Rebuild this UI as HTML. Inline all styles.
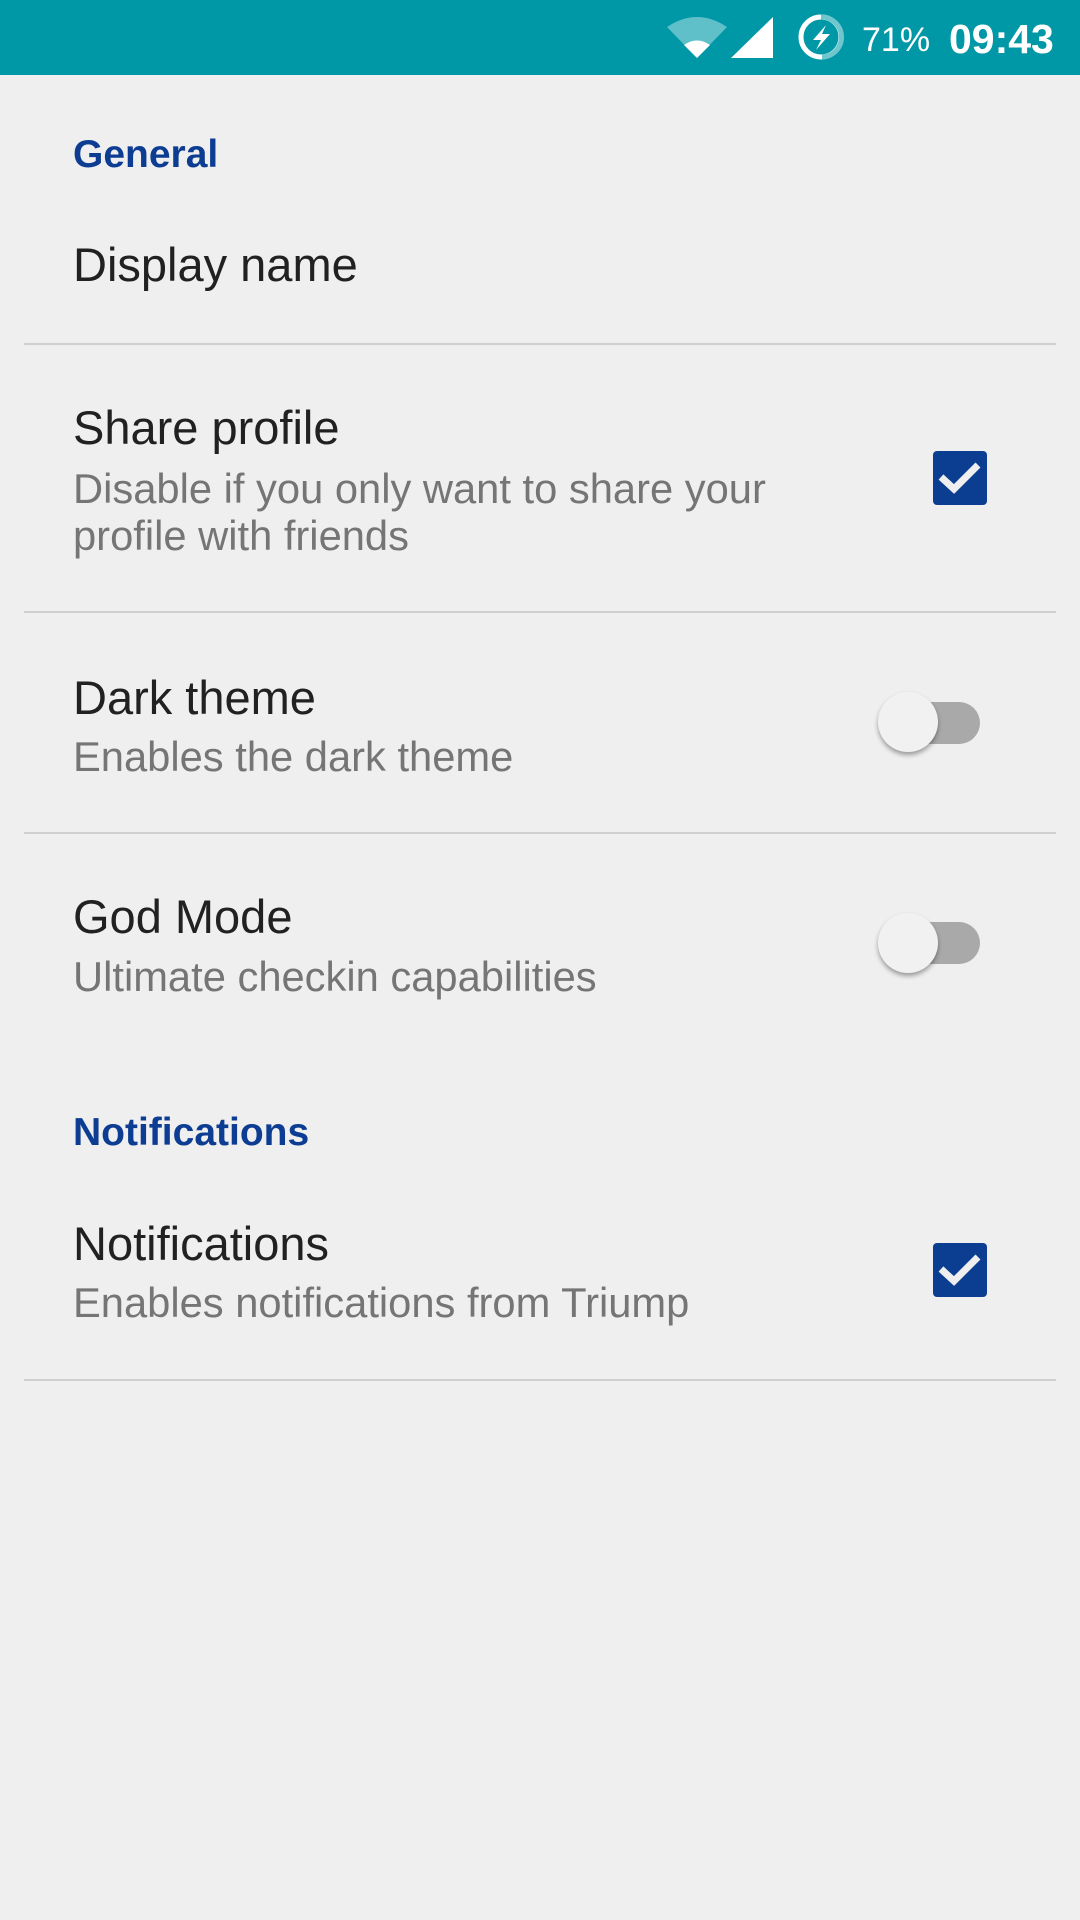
<!DOCTYPE html>
<html><head><meta charset="utf-8"><style>
body{margin:0;width:1080px;height:1920px;background:#efefef;position:relative;overflow:hidden;font-family:"Liberation Sans",sans-serif;}
.sb{position:absolute;left:0;top:0;width:1080px;height:75px;background:#0098a6;}
.t{position:absolute;left:73px;white-space:nowrap;line-height:1;}
.cat{font-size:39px;font-weight:bold;color:#0d3d92;}
.ti{font-size:47px;color:#212121;}
.su{font-size:41.7px;color:#757575;}
.dv{position:absolute;left:24px;width:1032px;height:2px;background:#d0d0d0;}
.cb{position:absolute;left:933px;width:54px;height:54px;background:#0b3d91;border-radius:4px;}
.sw{position:absolute;left:880px;width:100px;height:42px;background:#a9a9a9;border-radius:21px;}
.th{position:absolute;left:878px;width:60px;height:60px;border-radius:50%;background:#f1f1f1;box-shadow:0 3px 5px rgba(0,0,0,.35);}
</style></head><body>
<div class="sb">
<svg width="1080" height="75" style="position:absolute;left:0;top:0">
<path d="M667 27 Q697 7 727 27 L697 58 Z" fill="#5fc0c9"/>
<path d="M684 45 Q697 36 710 45 L697 58 Z" fill="#fff"/>
<path d="M731 58 L773 17 L773 58 Z" fill="#fff"/>
<circle cx="821" cy="37" r="20" fill="none" stroke="#fff" stroke-width="5"/>
<path d="M821 17 A20 20 0 0 1 822 57" fill="none" stroke="#6fc6cd" stroke-width="5"/>
<path d="M826 25 L813 40 L821 40 L816 50 L830 34 L822 34 Z" fill="#fff"/>
<text x="862" y="51" font-family="Liberation Sans" font-size="34" fill="#fff">71%</text>
<text x="949" y="53" font-family="Liberation Sans" font-size="41" font-weight="bold" fill="#fff">09:43</text>
</svg>
</div>
<div class="t cat" style="top:135px">General</div>
<div class="t ti" style="top:241px">Display name</div>
<div class="dv" style="top:343px"></div>
<div class="t ti" style="top:404px">Share profile</div>
<div class="t su" style="top:468px">Disable if you only want to share your</div>
<div class="t su" style="top:515px">profile with friends</div>
<div class="cb" style="top:451px"><svg width="54" height="54"><path d="M8 26 L21 38 L45 14" fill="none" stroke="#efefef" stroke-width="7"/></svg></div>
<div class="dv" style="top:611px"></div>
<div class="t ti" style="top:674px">Dark theme</div>
<div class="t su" style="top:736px">Enables the dark theme</div>
<div class="sw" style="top:702px"></div><div class="th" style="top:692px"></div>
<div class="dv" style="top:832px"></div>
<div class="t ti" style="top:893px">God Mode</div>
<div class="t su" style="top:956px">Ultimate checkin capabilities</div>
<div class="sw" style="top:922px"></div><div class="th" style="top:913px"></div>
<div class="t cat" style="top:1113px">Notifications</div>
<div class="t ti" style="top:1220px">Notifications</div>
<div class="t su" style="top:1282px">Enables notifications from Triump</div>
<div class="cb" style="top:1243px"><svg width="54" height="54"><path d="M8 26 L21 38 L45 14" fill="none" stroke="#efefef" stroke-width="7"/></svg></div>
<div class="dv" style="top:1379px"></div>
</body></html>
